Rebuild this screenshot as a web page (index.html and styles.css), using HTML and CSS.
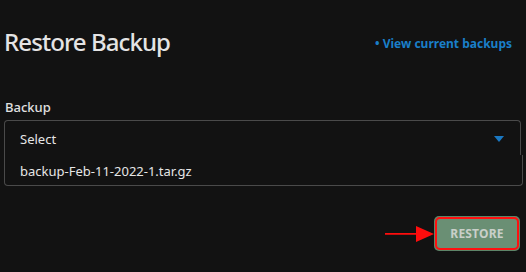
FILE: index.html
```html
<!DOCTYPE html>
<html>
<head>
<meta charset="utf-8">
<link rel="stylesheet" href="styles.css">
</head>
<body>
<div class="page">
  <header class="header">
    <h1 class="title">Restore Backup</h1>
    <a class="link" href="#">• View current backups</a>
  </header>
  <div class="field">
    <label class="label">Backup</label>
    <div class="select">
      <span class="select-text">Select</span>
      <svg class="caret" width="10" height="6" viewBox="0 0 10 6"><path d="M0 0H10L5 6Z" fill="#1a78c2"/></svg>
    </div>
    <div class="options">
      <div class="option">backup-Feb-11-2022-1.tar.gz</div>
    </div>
  </div>
  <div class="actions">
    <svg class="arrow" width="50" height="18" viewBox="0 0 50 18"><path d="M0 8H34V9.8H0Z" fill="#ff0d0d"/><path d="M31 1L49 8.9L31 17Z" fill="#ff0d0d"/></svg>
    <div class="btn-wrap">
      <button class="btn">RESTORE</button>
    </div>
  </div>
</div>
</body>
</html>
```

FILE: styles.css
```css
html, body {
  margin: 0;
  padding: 0;
  background: #121212;
  height: 100%;
}
.page {
  font-family: "Noto Sans", "Open Sans", sans-serif;
  padding: 0 4px 0 4px;
  width: 518px;
}
.header {
  display: flex;
  justify-content: space-between;
  align-items: center;
  padding-top: 25px;
  height: 34px;
}
.title {
  margin: 0;
  font-size: 24px;
  font-weight: 500;
  letter-spacing: -0.9px;
  color: #e4e4e4;
  padding-left: 0;
  line-height: 34px;
}
.link {
  color: #1a7fc9;
  font-weight: 700;
  font-size: 12px;
  text-decoration: none;
  margin-right: 10px;
  margin-top: 2px;
}
.field {
  margin-top: 39px;
}
.label {
  display: block;
  color: #e0e0e0;
  font-size: 13px;
  font-weight: 500;
  padding-left: 1px;
  line-height: 18px;
}
.select {
  margin-top: 4px;
  box-sizing: border-box;
  height: 35px;
  width: 517px;
  border: 1px solid #4a4a4a;
  border-bottom: none;
  border-radius: 4px 4px 0 0;
  display: flex;
  align-items: center;
  justify-content: space-between;
  padding: 2px 16px 0 15px;
  color: #e6e6e6;
  font-size: 13px;
}
.options {
  box-sizing: border-box;
  width: 519px;
  height: 31px;
  border: 1px solid #4a4a4a;
  border-top: none;
  border-radius: 0 0 4px 4px;
  display: flex;
  align-items: center;
  padding: 2px 15px 0;
  color: #e6e6e6;
  font-size: 13px;
}
.actions {
  display: flex;
  justify-content: flex-end;
  align-items: center;
  margin-top: 30px;
  padding-right: 2px;
}
.arrow {
  margin-right: -1px;
}
.btn-wrap {
  padding: 1px;
  background: #5e8468;
  border-radius: 5px;
}
.btn {
  display: block;
  width: 84px;
  height: 33px;
  box-sizing: border-box;
  border: 2px solid #ff1010;
  border-radius: 5px;
  background: #6a8f74;
  color: #c9cfc9;
  font-family: "Noto Sans", "Open Sans", sans-serif;
  font-weight: 700;
  font-size: 12px;
  letter-spacing: 0.2px;
  padding: 0;
}
```
